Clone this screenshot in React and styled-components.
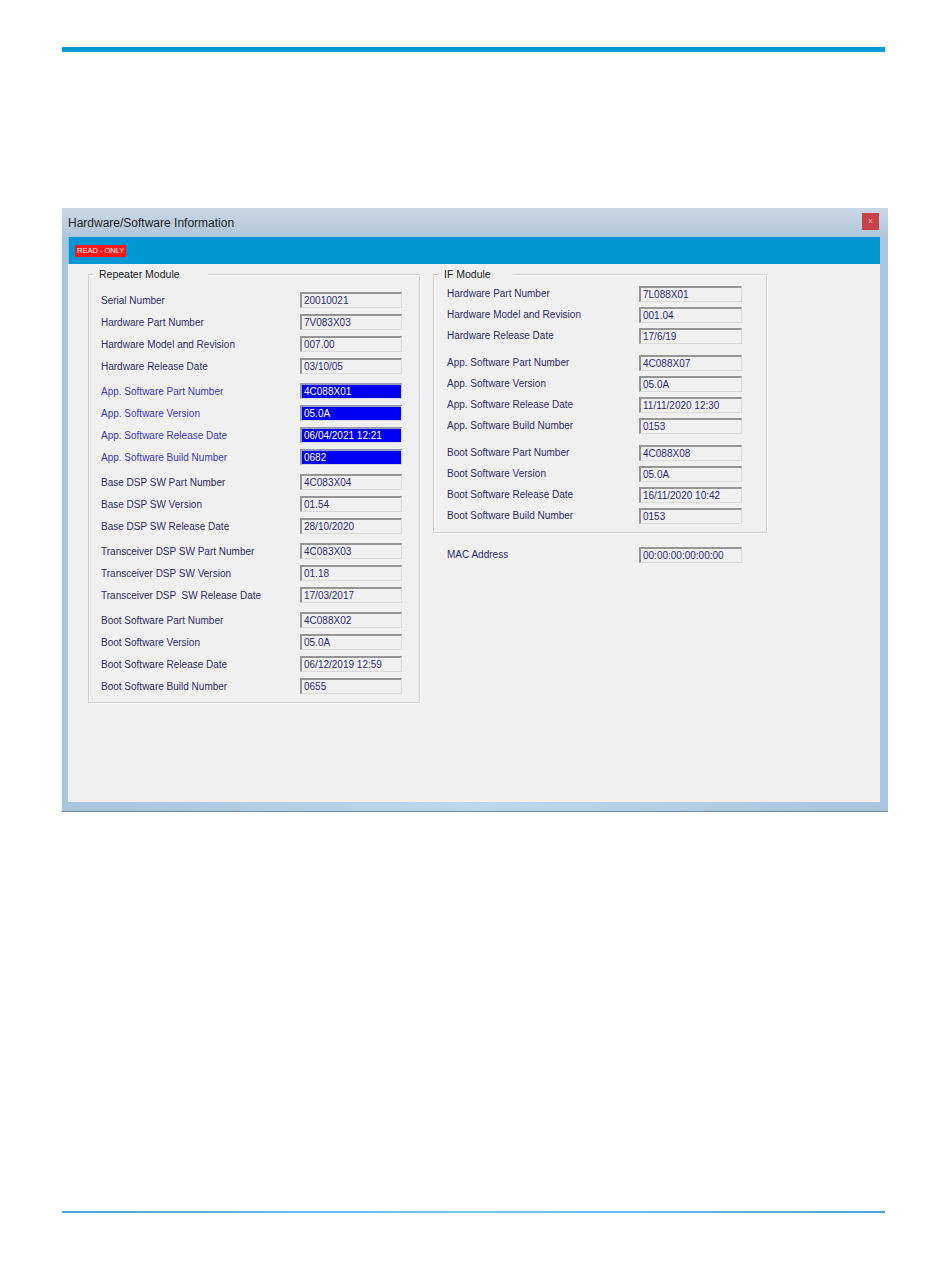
import styled, { createGlobalStyle } from "styled-components";

const Global = createGlobalStyle`
  html, body { margin: 0; padding: 0; background: #fff; }
  body { font-family: "Liberation Sans", Arial, sans-serif; }
`;

const repeaterGroups = [
  [
    ["Serial Number", "20010021"],
    ["Hardware Part Number", "7V083X03"],
    ["Hardware Model and Revision", "007.00"],
    ["Hardware Release Date", "03/10/05"],
  ],
  [
    ["App. Software Part Number", "4C088X01", true],
    ["App. Software Version", "05.0A", true],
    ["App. Software Release Date", "06/04/2021 12:21", true],
    ["App. Software Build Number", "0682", true],
  ],
  [
    ["Base DSP SW Part Number", "4C083X04"],
    ["Base DSP SW Version", "01.54"],
    ["Base DSP SW Release Date", "28/10/2020"],
  ],
  [
    ["Transceiver DSP SW Part Number", "4C083X03"],
    ["Transceiver DSP SW Version", "01.18"],
    ["Transceiver DSP \u00a0SW Release Date", "17/03/2017"],
  ],
  [
    ["Boot Software Part Number", "4C088X02"],
    ["Boot Software Version", "05.0A"],
    ["Boot Software Release Date", "06/12/2019 12:59"],
    ["Boot Software Build Number", "0655"],
  ],
];

const ifGroups = [
  [
    ["Hardware Part Number", "7L088X01"],
    ["Hardware Model and Revision", "001.04"],
    ["Hardware Release Date", "17/6/19"],
  ],
  [
    ["App. Software Part Number", "4C088X07"],
    ["App. Software Version", "05.0A"],
    ["App. Software Release Date", "11/11/2020 12:30"],
    ["App. Software Build Number", "0153"],
  ],
  [
    ["Boot Software Part Number", "4C088X08"],
    ["Boot Software Version", "05.0A"],
    ["Boot Software Release Date", "16/11/2020 10:42"],
    ["Boot Software Build Number", "0153"],
  ],
];

const Page = styled.div`
  width: 950px;
  height: 1267px;
  padding: 47px 0 0 62px;
  box-sizing: border-box;
`;

const TopRule = styled.div`
  width: 823px;
  height: 5px;
  background: #0a9ad4;
`;

const BottomRule = styled.div`
  width: 823px;
  height: 2px;
  margin-top: 399px;
  background: linear-gradient(90deg, #4aa6dc, #7cc6ee 50%, #4aa6dc);
`;

const Window = styled.div`
  width: 826px;
  height: 604px;
  margin-top: 156px;
  display: flex;
  flex-direction: column;
  background: linear-gradient(90deg, #a9c4dd, #bcd6ec 50%, #a9c4dd);
  box-sizing: border-box;
  padding: 0 8px 9px 6px;
  border-bottom: 1px solid #6e8aa0;
`;

const TitleBar = styled.div`
  height: 29px;
  margin: 0 -8px 0 -6px;
  padding: 0 9px 0 6px;
  display: flex;
  align-items: center;
  justify-content: space-between;
  background: linear-gradient(#c9d8e6, #b0c5d9);
  font-size: 12px;
  color: #1e1e1e;
`;

const CloseButton = styled.div`
  width: 17px;
  height: 17px;
  margin-top: -2px;
  background: #c8414a;
  color: #f4d0d0;
  font-size: 8px;
  line-height: 16px;
  text-align: center;
`;

const Strip = styled.div`
  height: 27px;
  background: #0096d6;
  display: flex;
  align-items: center;
  padding-left: 6px;
  border-left: 1px solid #6fc3ea;
`;

const Badge = styled.div`
  background: #ff1616;
  color: #fff;
  font-size: 7.5px;
  height: 12px;
  line-height: 12px;
  padding: 0 2px;
  border-radius: 1px;
`;

const Content = styled.div`
  flex: 1;
  background: #f0f0f0;
  display: flex;
  align-items: flex-start;
  gap: 13px;
  padding: 10px 0 0 20px;
`;

const Column = styled.div`
  display: flex;
  flex-direction: column;
`;

const GroupBox = styled.div`
  position: relative;
  box-sizing: border-box;
  width: ${(p) => p.$w}px;
  height: ${(p) => p.$h}px;
  border: 1px solid #cfcfcf;
  box-shadow: inset 1px 1px 0 #fff, 1px 1px 0 #fff;
  padding: ${(p) => p.$pad};
`;

const Legend = styled.div`
  position: absolute;
  top: -7px;
  left: 4px;
  width: ${(p) => p.$w}px;
  padding-left: 6px;
  box-sizing: border-box;
  background: #f0f0f0;
  font-size: 10.5px;
  line-height: 13px;
  color: #222;
`;

const RowGroup = styled.div`
  margin-top: ${(p) => p.$gap}px;
`;

const Row = styled.div`
  display: grid;
  grid-template-columns: ${(p) => p.$cols};
  align-items: center;
  height: ${(p) => p.$h}px;
`;

const Label = styled.div`
  font-size: 10px;
  color: ${(p) => (p.$hl ? "#3b3bc4" : "#2e2e6c")};
  white-space: pre;
`;

const Value = styled.div`
  height: 16px;
  box-sizing: border-box;
  font-size: 10px;
  line-height: 13px;
  padding-left: 2px;
  white-space: nowrap;
  color: ${(p) => (p.$hl ? "#fff" : "#2c2c7e")};
  background: ${(p) => (p.$hl ? "#0000f2" : "#f0f0f0")};
  border-top: 2px solid ${(p) => (p.$hl ? "#9a9ab8" : "#959595")};
  border-left: 2px solid ${(p) => (p.$hl ? "#9a9ab8" : "#959595")};
  border-right: 1px solid #dadada;
  border-bottom: 1px solid #dadada;
`;

const MacRow = styled.div`
  margin-top: 11px;
  padding-left: 14px;
`;

function Groups({ groups, cols, h, gap }) {
  return groups.map((g, i) => (
    <RowGroup key={i} $gap={i === 0 ? 0 : gap}>
      {g.map(([label, value, hl]) => (
        <Row key={label} $cols={cols} $h={h}>
          <Label $hl={hl}>{label}</Label>
          <Value $hl={hl}>{value}</Value>
        </Row>
      ))}
    </RowGroup>
  ));
}

export default function App() {
  return (
    <>
      <Global />
      <Page>
        <TopRule />
        <Window>
          <TitleBar>
            <span>Hardware/Software Information</span>
            <CloseButton>x</CloseButton>
          </TitleBar>
          <Strip>
            <Badge>READ - ONLY</Badge>
          </Strip>
          <Content>
            <GroupBox $w={332} $h={429} $pad="14px 18px 0 12px">
              <Legend $w={115}>Repeater Module</Legend>
              <Groups groups={repeaterGroups} cols="199px 102px" h={22} gap={3} />
            </GroupBox>
            <Column>
              <GroupBox $w={334} $h={259} $pad="8px 0 0 13px">
                <Legend $w={75}>IF Module</Legend>
                <Groups groups={ifGroups} cols="192px 103px" h={21} gap={6} />
              </GroupBox>
              <MacRow>
                <Row $cols="192px 103px" $h={21}>
                  <Label>MAC Address</Label>
                  <Value>00:00:00:00:00:00</Value>
                </Row>
              </MacRow>
            </Column>
          </Content>
        </Window>
        <BottomRule />
      </Page>
    </>
  );
}
